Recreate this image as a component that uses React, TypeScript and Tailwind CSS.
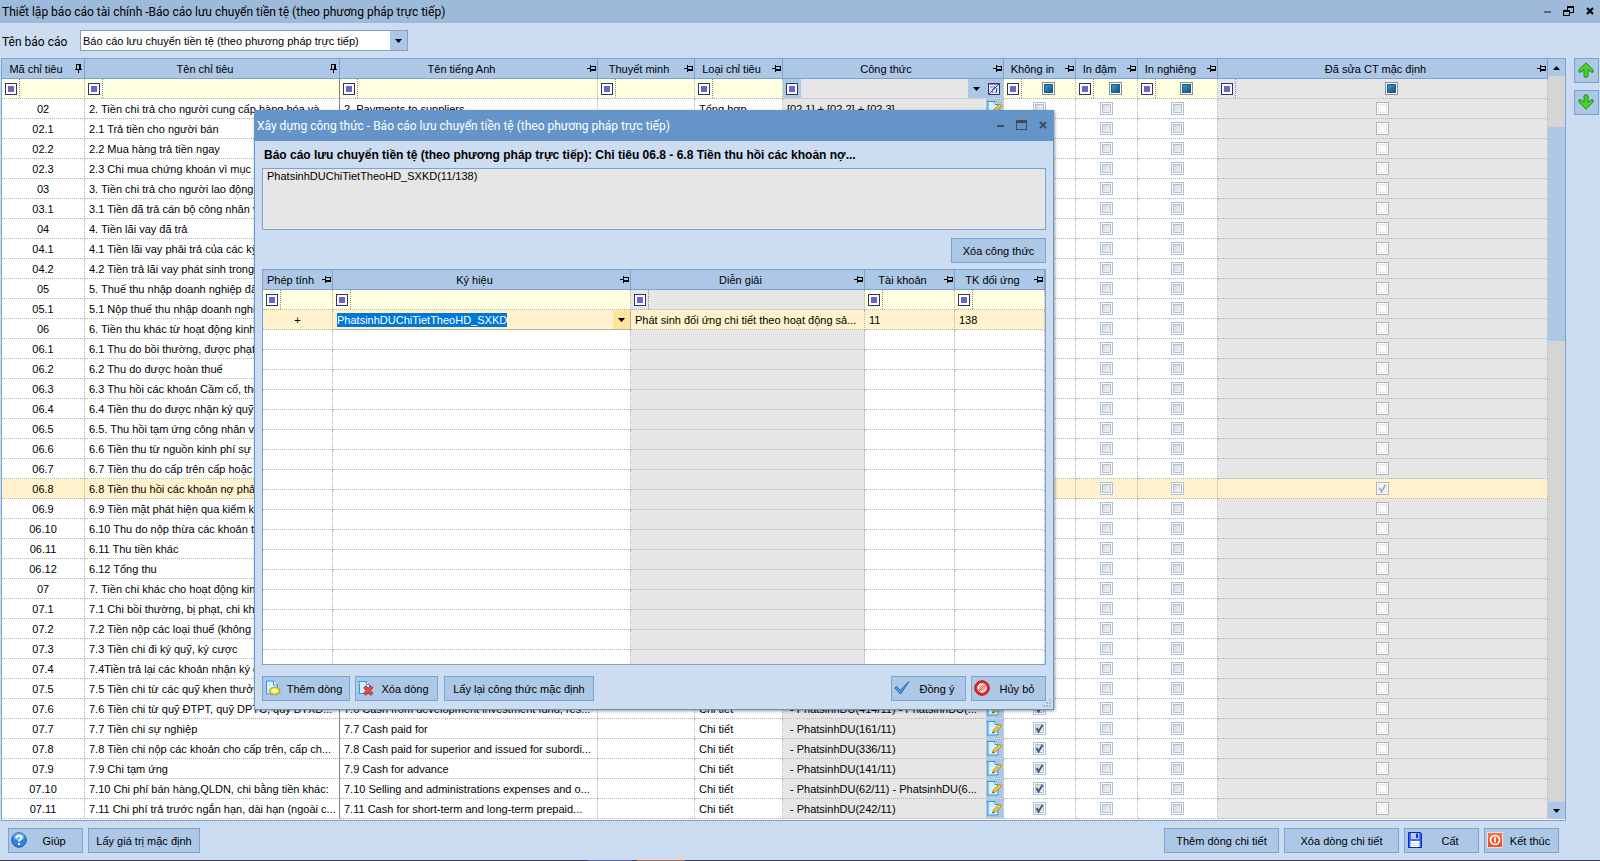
import { clsx } from "clsx";
import { FC, ReactNode } from "react";

type TRow = {
  code: string;
  name: string;
  english?: string;
  kind?: string;
  formula?: string;
  hidden?: boolean;
  edited?: boolean;
};

const REPORT_NAME = "Báo cáo lưu chuyển tiền tệ (theo phương pháp trực tiếp)";

const rows: TRow[] = [
  {
    code: "02",
    name: "2. Tiền chi trả cho người cung cấp hàng hóa và",
    english: "2. Payments to suppliers",
    kind: "Tổng hợp",
    formula: "[02.1] + [02.2] + [02.3]",
  },
  { code: "02.1", name: "2.1 Trả tiền cho người bán" },
  { code: "02.2", name: "2.2 Mua hàng trả tiền ngay" },
  { code: "02.3", name: "2.3 Chi mua chứng khoán vì mục đích" },
  { code: "03", name: "3. Tiền chi trả cho người lao động" },
  { code: "03.1", name: "3.1 Tiền đã trả cán bộ công nhân viên" },
  { code: "04", name: "4. Tiền lãi vay đã trả" },
  { code: "04.1", name: "4.1 Tiền lãi vay phải trả của các kỳ" },
  { code: "04.2", name: "4.2 Tiền trả lãi vay phát sinh trong kỳ" },
  { code: "05", name: "5. Thuế thu nhập doanh nghiệp đã nộp" },
  { code: "05.1", name: "5.1 Nộp thuế thu nhập doanh nghiệp" },
  { code: "06", name: "6. Tiền thu khác từ hoạt động kinh doanh" },
  { code: "06.1", name: "6.1 Thu do bồi thường, được phạt, tiền" },
  { code: "06.2", name: "6.2 Thu do được hoàn thuế" },
  { code: "06.3", name: "6.3 Thu hồi các khoản Cầm cố, thế chấp" },
  { code: "06.4", name: "6.4 Tiền thu do được nhận ký quỹ" },
  { code: "06.5", name: "6.5. Thu hồi tạm ứng công nhân viên" },
  { code: "06.6", name: "6.6 Tiền thu từ nguồn kinh phí sự nghiệp" },
  { code: "06.7", name: "6.7 Tiền thu do cấp trên cấp hoặc cấp" },
  { code: "06.8", name: "6.8 Tiền thu hồi các khoản nợ phải thu", edited: true },
  { code: "06.9", name: "6.9 Tiền mặt phát hiện qua kiểm kê" },
  { code: "06.10", name: "6.10 Thu do nộp thừa các khoản thuế" },
  { code: "06.11", name: "6.11 Thu tiền khác" },
  { code: "06.12", name: "6.12 Tổng thu" },
  { code: "07", name: "7. Tiền chi khác cho hoạt động kinh doanh" },
  { code: "07.1", name: "7.1 Chi bồi thường, bị phạt, chi khác" },
  { code: "07.2", name: "7.2 Tiền nộp các loại thuế (không bao" },
  { code: "07.3", name: "7.3 Tiền chi đi ký quỹ, ký cược" },
  { code: "07.4", name: "7.4Tiền trả lại các khoản nhận ký quỹ" },
  { code: "07.5", name: "7.5 Tiền chi từ các quỹ khen thưởng" },
  {
    code: "07.6",
    name: "7.6 Tiền chi từ quỹ ĐTPT, quỹ DPTC, quỹ BTXD...",
    english: "7.6 Cash from development investment fund, res...",
    kind: "Chi tiết",
    formula: "- PhatsinhDU(414/11) - PhatsinhDU(...",
    hidden: true,
  },
  {
    code: "07.7",
    name: "7.7 Tiền chi sự nghiệp",
    english: "7.7 Cash paid for",
    kind: "Chi tiết",
    formula: "- PhatsinhDU(161/11)",
    hidden: true,
  },
  {
    code: "07.8",
    name: "7.8 Tiền chi nộp các khoản cho cấp trên, cấp ch...",
    english: "7.8 Cash paid for superior and issued for subordi...",
    kind: "Chi tiết",
    formula: "- PhatsinhDU(336/11)",
    hidden: true,
  },
  {
    code: "07.9",
    name: "7.9 Chi tạm ứng",
    english: "7.9 Cash for advance",
    kind: "Chi tiết",
    formula: "- PhatsinhDU(141/11)",
    hidden: true,
  },
  {
    code: "07.10",
    name: "7.10 Chi phí bán hàng,QLDN, chi bằng tiền khác:",
    english: "7.10 Selling and administrations expenses and o...",
    kind: "Chi tiết",
    formula: "- PhatsinhDU(62/11) - PhatsinhDU(6...",
    hidden: true,
  },
  {
    code: "07.11",
    name: "7.11 Chi phí trả trước ngắn hạn, dài hạn (ngoài c...",
    english: "7.11 Cash for short-term and long-term prepaid...",
    kind: "Chi tiết",
    formula: "- PhatsinhDU(242/11)",
    hidden: true,
  },
];

const CELL = "h-5 overflow-hidden whitespace-nowrap border-b border-r border-dotted border-[#b2b2b2] p-0";

/* Icons */

const PinIcon: FC<{ pinned?: boolean }> = ({ pinned }) => (
  <svg width="9" height="9" viewBox="0 0 9 9" shapeRendering="crispEdges" aria-hidden="true">
    {pinned ? (
      <path d="M2 0h5v5h1v1H5v3H4V6H1V5h1zM3 1v4h2V1z" fillRule="evenodd" />
    ) : (
      <path d="M0 4h3V1h1v1h5v5H4v1H3V5H0zM4 3v2h4V3z" fillRule="evenodd" />
    )}
  </svg>
);

const CaretIcon: FC<{ up?: boolean }> = ({ up }) => (
  <svg width="7" height="4" viewBox="0 0 7 4" aria-hidden="true">
    <path d={up ? "M0 4h7L3.500 0z" : "M0 0h7L3.500 4z"} />
  </svg>
);

const MinimizeIcon = () => (
  <svg width="7" height="11" viewBox="0 0 7 11" shapeRendering="crispEdges" aria-hidden="true">
    <path d="M0 5h7v2H0z" fill="currentColor" />
  </svg>
);

const RestoreIcon = () => (
  <svg width="11" height="11" viewBox="0 0 11 11" shapeRendering="crispEdges" aria-hidden="true">
    <path d="M4 0h7v7H7V6h3V2H5v2H4zM0 4h7v6H0zM1 6v3h5V6z" fill="currentColor" fillRule="evenodd" />
  </svg>
);

const MaximizeIcon = () => (
  <svg width="11" height="11" viewBox="0 0 11 11" shapeRendering="crispEdges" aria-hidden="true">
    <path d="M0 0h11v10H0zM1 3v6h9V3z" fill="currentColor" fillRule="evenodd" />
  </svg>
);

const CloseIcon = () => (
  <svg width="8" height="11" viewBox="0 0 8 11" aria-hidden="true">
    <path d="M1 2l6 6M7 2L1 8" stroke="currentColor" strokeWidth="2" />
  </svg>
);

const ClearFilterIcon = () => (
  <svg width="12" height="12" viewBox="0 0 12 12" aria-hidden="true">
    <path d="M.5.5h11v11H.5z" fill="#e3e7f8" stroke="#33336b" />
    <path d="M1 1h10v1H1z" fill="#8c8fd6" />
    <path d="M2 4h5L4.500 6.500V10" fill="none" stroke="#7a7dcc" />
    <path d="M1 11L11 1M9 5L8 10" fill="none" stroke="#33336b" />
  </svg>
);

const EditIcon = () => (
  <svg width="16" height="16" viewBox="0 0 16 16" aria-hidden="true">
    <path d="M1 1.500h8l3 3V15H1l1-1V3z" fill="#d9f1fc" stroke="#2b95dd" />
    <path d="M9 1.500v3h3" fill="#fff" stroke="#2b95dd" />
    <path d="M13.500 4l2 2-6 6-3 1 1-3z" fill="#f7cd45" stroke="#b48312" />
    <path d="M6.500 13l.5-1.500 1 1z" fill="#333" />
  </svg>
);

const PagePlusIcon = () => (
  <svg width="16" height="16" viewBox="0 0 16 16" aria-hidden="true">
    <path d="M1.500 1h7l4 4v9h-11z" fill="#d5effc" stroke="#2f97dd" />
    <path d="M8.500 1v4h4" fill="#fff" stroke="#2f97dd" />
    <path
      d="M9.500 6.500l1.300 1.300 2-.3.500 1.500 1.700.5-.5 1.500.5 1.500-1.700.5-.8 1.200-1.700-.2-1.300 1-1.300-1-1.800.2-.6-1.300-1.300-.6.600-1.400-.6-1.200 1.500-.6.700-1.300 1.700.1z"
      fill="#f5ea55"
      stroke="#a79b12"
    />
    <ellipse cx="9.500" cy="10.800" rx="2.500" ry="1.500" fill="#fffbb5" />
  </svg>
);

const PageDeleteIcon = () => (
  <svg width="16" height="16" viewBox="0 0 16 16" aria-hidden="true">
    <path d="M.5 1.500h8l3 3v9H.5l1-1v-9z" fill="#d5effc" stroke="#2f97dd" />
    <path d="M8.500 1.500v3h3" fill="#fff" stroke="#2f97dd" />
    <path d="M6.500 6.500l7.500 8M14 6.500l-7.500 8" stroke="#a81f1f" strokeWidth="3.600" />
    <path d="M6.800 6.800l7 7.400M13.700 6.800l-7 7.400" stroke="#ea5050" strokeWidth="2" />
  </svg>
);

const AcceptIcon = () => (
  <svg width="16" height="16" viewBox="0 0 16 16" aria-hidden="true">
    <path d="M.8 8l2-1.500 3.400 4L15 1.500 6.500 14z" fill="#53a5f3" stroke="#1a62b8" strokeLinejoin="round" />
  </svg>
);

const CancelIcon = () => (
  <svg width="16" height="16" viewBox="0 0 16 16" aria-hidden="true">
    <circle cx="8" cy="8" r="7.300" fill="#e22b2b" stroke="#b01818" />
    <circle cx="8" cy="8" r="4" fill="#f6b0a8" stroke="#fff" strokeWidth="1.500" />
    <path d="M5.200 10.800l5.600-5.600" stroke="#e22b2b" strokeWidth="3" />
    <path d="M5 9.800L9.800 5M6.200 11L11 6.200" stroke="#fff" />
  </svg>
);

const HelpIcon = () => (
  <svg width="16" height="16" viewBox="0 0 16 16" aria-hidden="true">
    <circle cx="8" cy="8" r="7.300" fill="#2f83e0" stroke="#1b5aa8" />
    <ellipse cx="8" cy="4.800" rx="5.500" ry="3.700" fill="#8fc3f7" opacity=".7" />
    <path d="M5.500 6c0-3.200 5-3.200 5-.3C10.500 7.600 8 7.500 8 9.500" fill="none" stroke="#fff" strokeWidth="1.800" />
    <path d="M7 11h2v2H7z" fill="#fff" />
  </svg>
);

const SaveIcon = () => (
  <svg width="16" height="16" viewBox="0 0 16 16" aria-hidden="true">
    <path d="M1.500.5h12l1 1v14h-13z" fill="#3f6cf0" stroke="#0a23b8" />
    <path d="M4 1h8v6H4z" fill="#b9ccf8" />
    <path d="M9 1.500h2V6H9z" fill="#1533c8" />
    <path d="M3.500 9h9v6h-9z" fill="#fff" />
    <path d="M4 11h8v1H4zM4 13h8v1H4z" fill="#d3d8e2" />
  </svg>
);

const ExitIcon = () => (
  <svg width="16" height="16" viewBox="0 0 16 16" aria-hidden="true">
    <path d="M.5.5h15v15H.5z" fill="#e4552c" stroke="#f6dcd2" />
    <path d="M1 1h14v6H1z" fill="#ec7249" />
    <circle cx="8" cy="8" r="4.500" fill="none" stroke="#fff" strokeWidth="1.600" />
    <path d="M8 5.500v5" stroke="#fff" strokeWidth="1.800" />
  </svg>
);

const ArrowIcon: FC<{ down?: boolean }> = ({ down }) => (
  <svg width="16" height="16" viewBox="0 0 16 16" aria-hidden="true">
    <path
      d="M8 .8l7 7v2.400h-1.800L10 7.500v7L8 15.500l-2-1v-7l-3.200 2.700H1V7.800z"
      fill="#4fd02c"
      stroke="#1f8a10"
      strokeLinejoin="round"
      transform={down ? "rotate(180 8 8)" : undefined}
    />
  </svg>
);

/* Controls */

type TButton = {
  children: ReactNode;
  className?: string;
  icon?: ReactNode;
};

const Button: FC<TButton> = ({ children, className, icon }) => (
  <button
    type="button"
    className={clsx(
      "flex h-[25px] shrink-0 items-center whitespace-nowrap border border-[#7ba2d0] bg-[#adc7e7]",
      className,
    )}
  >
    {icon && <span className="ml-0.5 shrink-0 pb-0.5">{icon}</span>}
    <span className={clsx("flex-1 text-center", icon && "pr-px")}>{children}</span>
  </button>
);

type TCheckbox = {
  checked?: boolean;
  label: string;
  muted?: boolean;
};

const Checkbox: FC<TCheckbox> = ({ checked = false, label, muted }) => (
  <span className="relative mx-auto block size-[13px]">
    <input
      type="checkbox"
      aria-label={label}
      defaultChecked={checked}
      className={clsx(
        "block size-[13px] appearance-none border bg-linear-to-br",
        muted
          ? "border-[#b1b1b7] from-[#f4f4f6] to-white shadow-[inset_0_0_0_1px_#fff,inset_0_0_0_2px_#e6e6ea]"
          : "border-[#a9c1e1] from-[#cdd0d6] to-[#fbfbfb] shadow-[inset_0_0_0_1px_#fff,inset_0_0_0_2px_#b9bec8]",
      )}
    />
    {checked && (
      <svg
        className="pointer-events-none absolute inset-0"
        width="13"
        height="13"
        viewBox="0 0 13 13"
        aria-hidden="true"
      >
        <path
          d="M3.500 6l2 3.500L9.500 3"
          fill="none"
          stroke={muted ? "#a9b2c2" : "#3f5c8c"}
          strokeWidth="2"
        />
      </svg>
    )}
  </span>
);

const FilterMark: FC<{ shaded?: boolean }> = ({ shaded }) => (
  <span
    className={clsx(
      "flex h-full w-[18px] shrink-0 items-center border-r border-dotted pl-[3px]",
      shaded ? "border-transparent bg-[#adc7e7]" : "border-[#8c8c8c]",
    )}
  >
    <span className="flex size-3 items-center justify-center border border-[#33336b] bg-white">
      <span className="size-1.5 bg-[#6666cc]"></span>
    </span>
  </span>
);

const TextFilter: FC<{ label: string }> = ({ label }) => (
  <div className="flex h-[19px]">
    <FilterMark />
    <input type="text" aria-label={label} className="w-full min-w-0 bg-transparent px-1 outline-none" />
  </div>
);

const CheckFilter: FC<{ label: string }> = ({ label }) => (
  <div className="flex h-[19px] items-center">
    <FilterMark />
    <span className="flex flex-1 justify-center">
      <input
        type="checkbox"
        aria-label={label}
        className="block size-[13px] appearance-none border border-[#8a8f94] bg-linear-to-br from-[#3fb0dc] to-[#123f74] shadow-[inset_0_0_0_1px_#fff,inset_0_0_0_2px_#1d5b87]"
      />
    </span>
  </div>
);

const HeadCell: FC<{ children: string; pinned?: boolean }> = ({ children, pinned }) => (
  <th className="h-5 border-b border-r border-[#7ba2d0] bg-[#adc7e7] p-0 font-normal">
    <div className="flex items-center pr-px">
      <span className="flex-1 whitespace-nowrap pr-1 text-center">{children}</span>
      <PinIcon pinned={pinned} />
    </div>
  </th>
);

/* Main grid */

const IndicatorRow: FC<{ row: TRow }> = ({ row }) => {
  const active = row.edited;

  return (
    <tr className={active ? "bg-[#fff2cc]" : "bg-white"}>
      <td className={clsx(CELL, "text-center")}>{row.code}</td>
      <td className="h-5 overflow-hidden whitespace-nowrap border-b border-r border-b-[#b2b2b2] border-r-[#808080] p-0 pl-1 [border-bottom-style:dotted]">
        {row.name}
      </td>
      <td className={clsx(CELL, "pl-1")}>{row.english}</td>
      <td className={CELL}></td>
      <td className={clsx(CELL, "pl-1")}>{row.kind}</td>
      <td className={clsx(CELL, !active && "bg-[#e6e6e6]")}>
        <div className="flex h-[19px] items-center">
          <span
            className={clsx(
              "min-w-0 flex-1 overflow-hidden",
              row.kind === "Chi tiết" ? "pl-[7px]" : "pl-1",
            )}
          >
            {row.formula}
          </span>
          <button
            type="button"
            aria-label={`Sửa công thức ${row.code}`}
            className="flex h-full w-[17px] shrink-0 items-center bg-[#adc7e7] pb-0.5"
          >
            <EditIcon />
          </button>
        </div>
      </td>
      <td className={CELL}>
        <Checkbox checked={row.hidden} label={`Không in ${row.code}`} />
      </td>
      <td className={CELL}>
        <Checkbox label={`In đậm ${row.code}`} />
      </td>
      <td className={CELL}>
        <Checkbox label={`In nghiêng ${row.code}`} />
      </td>
      <td className={clsx(CELL, !active && "bg-[#e6e6e6]")}>
        <Checkbox checked={row.edited} label={`Đã sửa ${row.code}`} muted />
      </td>
    </tr>
  );
};

const IndicatorGrid = () => (
  <table className="min-w-0 flex-1 table-fixed border-separate border-spacing-0 self-start">
    <colgroup>
      <col className="w-[83px]" />
      <col className="w-[255px]" />
      <col className="w-[258px]" />
      <col className="w-[97px]" />
      <col className="w-[88px]" />
      <col className="w-[221px]" />
      <col className="w-[72px]" />
      <col className="w-[62px]" />
      <col className="w-[80px]" />
      <col />
    </colgroup>
    <thead>
      <tr>
        <HeadCell pinned>Mã chỉ tiêu</HeadCell>
        <HeadCell pinned>Tên chỉ tiêu</HeadCell>
        <HeadCell>Tên tiếng Anh</HeadCell>
        <HeadCell>Thuyết minh</HeadCell>
        <HeadCell>Loại chỉ tiêu</HeadCell>
        <HeadCell>Công thức</HeadCell>
        <HeadCell>Không in</HeadCell>
        <HeadCell>In đậm</HeadCell>
        <HeadCell>In nghiêng</HeadCell>
        <HeadCell>Đã sửa CT mặc định</HeadCell>
      </tr>
    </thead>
    <tbody>
      <tr className="bg-[#ffffe1]">
        <td className={CELL}>
          <TextFilter label="Lọc mã chỉ tiêu" />
        </td>
        <td className="h-5 border-b border-r border-b-[#b2b2b2] border-r-[#808080] p-0 [border-bottom-style:dotted]">
          <TextFilter label="Lọc tên chỉ tiêu" />
        </td>
        <td className={CELL}>
          <TextFilter label="Lọc tên tiếng Anh" />
        </td>
        <td className={CELL}>
          <TextFilter label="Lọc thuyết minh" />
        </td>
        <td className={CELL}>
          <TextFilter label="Lọc loại chỉ tiêu" />
        </td>
        <td className={clsx(CELL, "bg-[#e6e6e6]")}>
          <div className="flex h-[19px]">
            <FilterMark shaded />
            <input
              type="text"
              aria-label="Lọc công thức"
              className="min-w-0 flex-1 bg-transparent px-1 outline-none"
            />
            <button
              type="button"
              aria-label="Chọn điều kiện lọc"
              className="flex w-[17px] items-center justify-center bg-[#adc7e7]"
            >
              <CaretIcon />
            </button>
            <button
              type="button"
              aria-label="Xóa điều kiện lọc"
              className="flex w-[18px] items-center justify-center bg-[#adc7e7]"
            >
              <ClearFilterIcon />
            </button>
          </div>
        </td>
        <td className={CELL}>
          <CheckFilter label="Lọc không in" />
        </td>
        <td className={CELL}>
          <CheckFilter label="Lọc in đậm" />
        </td>
        <td className={CELL}>
          <CheckFilter label="Lọc in nghiêng" />
        </td>
        <td className={clsx(CELL, "bg-[#e6e6e6]")}>
          <CheckFilter label="Lọc đã sửa CT mặc định" />
        </td>
      </tr>
      {rows.map((row) => (
        <IndicatorRow key={row.code} row={row} />
      ))}
    </tbody>
  </table>
);

const ScrollBar = () => (
  <div className="flex w-[17px] shrink-0 flex-col bg-[#d5d5d5]">
    <button
      type="button"
      aria-label="Cuộn lên"
      className="flex h-[17px] items-center justify-center bg-[#adc7e7]"
    >
      <CaretIcon up />
    </button>
    <div className="mt-[51px] h-[214px] bg-[#adc7e7]"></div>
    <button
      type="button"
      aria-label="Cuộn xuống"
      className="mt-auto flex h-[17px] items-center justify-center bg-[#adc7e7]"
    >
      <CaretIcon />
    </button>
  </div>
);

/* Formula window */

const FormulaGrid = () => (
  <div className="h-[396px] overflow-hidden border border-[#7ba2d0] bg-white">
    <table className="w-full table-fixed border-separate border-spacing-0">
      <colgroup>
        <col className="w-[70px]" />
        <col />
        <col className="w-[234px]" />
        <col className="w-[90px]" />
        <col className="w-[90px]" />
      </colgroup>
      <thead>
        <tr>
          <HeadCell>Phép tính</HeadCell>
          <HeadCell>Ký hiệu</HeadCell>
          <HeadCell>Diễn giải</HeadCell>
          <HeadCell>Tài khoản</HeadCell>
          <HeadCell>TK đối ứng</HeadCell>
        </tr>
      </thead>
      <tbody>
        <tr className="bg-[#ffffe1]">
          <td className={CELL}>
            <TextFilter label="Lọc phép tính" />
          </td>
          <td className={CELL}>
            <TextFilter label="Lọc ký hiệu" />
          </td>
          <td className={clsx(CELL, "bg-[#e6e6e6]")}>
            <TextFilter label="Lọc diễn giải" />
          </td>
          <td className={CELL}>
            <TextFilter label="Lọc tài khoản" />
          </td>
          <td className={CELL}>
            <TextFilter label="Lọc TK đối ứng" />
          </td>
        </tr>
        <tr className="bg-[#fff2cc]">
          <td className={clsx(CELL, "text-center")}>+</td>
          <td className="h-5 border-b border-r border-[#b2b2b2] p-0">
            <div className="flex h-[19px] items-center pl-1">
              <span className="bg-[#0078d7] leading-[14px] text-white">PhatsinhDUChiTietTheoHD_SXKD</span>
              <button
                type="button"
                aria-label="Chọn ký hiệu"
                className="ml-auto flex h-full w-[17px] items-center justify-center bg-[#ffe49c]"
              >
                <CaretIcon />
              </button>
            </div>
          </td>
          <td className={clsx(CELL, "pl-1")}>Phát sinh đối ứng chi tiết theo hoạt động sả...</td>
          <td className={clsx(CELL, "pl-1")}>11</td>
          <td className={clsx(CELL, "pl-1")}>138</td>
        </tr>
        {Array.from({ length: 17 }, (_, index) => (
          <tr key={index}>
            <td className={CELL}></td>
            <td className={CELL}></td>
            <td className={clsx(CELL, "bg-[#e6e6e6]")}></td>
            <td className={CELL}></td>
            <td className={CELL}></td>
          </tr>
        ))}
      </tbody>
    </table>
  </div>
);

const ResizeGrip = () => (
  <svg
    className="absolute bottom-px right-px"
    width="9"
    height="9"
    viewBox="0 0 9 9"
    shapeRendering="crispEdges"
    aria-hidden="true"
  >
    <path d="M6 0h2v2H6zM3 3h2v2H3zM6 3h2v2H6zM0 6h2v2H0zM3 6h2v2H3zM6 6h2v2H6z" fill="#b3b8c2" />
  </svg>
);

const FormulaWindow = () => (
  <section
    role="dialog"
    aria-labelledby="formula-title"
    className="absolute left-[254px] top-[110px] w-[800px] border border-t-0 border-[#6595c8] bg-[#ccdcf1] shadow-[1px_1px_3px_rgba(0,0,0,0.4)]"
  >
    <header className="flex h-[31px] items-center bg-[#6595c8] pl-0.5 pr-1.5 font-[Roboto,sans-serif] text-[12px] text-white">
      <h2 id="formula-title" className="flex-1 pt-px">
        Xây dựng công thức - {REPORT_NAME}
      </h2>
      <div className="flex items-center gap-3 text-[#444b57]">
        <button type="button" aria-label="Thu nhỏ">
          <MinimizeIcon />
        </button>
        <button type="button" aria-label="Phóng to">
          <MaximizeIcon />
        </button>
        <button type="button" aria-label="Đóng">
          <CloseIcon />
        </button>
      </div>
    </header>
    <div className="px-[7px] pb-2">
      <h3 className="flex h-[27px] items-center pl-0.5 text-[12px] font-bold">
        {REPORT_NAME}: Chỉ tiêu 06.8 - 6.8 Tiền thu hồi các khoản nợ...
      </h3>
      <textarea
        readOnly
        aria-label="Công thức"
        defaultValue="PhatsinhDUChiTietTheoHD_SXKD(11/138)"
        className="block h-[62px] w-full resize-none border border-[#7ba2d0] bg-[#e6e6e6] px-1 leading-[14px] outline-none"
      />
      <div className="flex justify-end pb-1.5 pt-2">
        <Button className="w-[95px]">Xóa công thức</Button>
      </div>
      <FormulaGrid />
      <div className="flex gap-[5px] pt-[11px]">
        <Button className="w-[88px]" icon={<PagePlusIcon />}>
          Thêm dòng
        </Button>
        <Button className="w-[83px]" icon={<PageDeleteIcon />}>
          Xóa dòng
        </Button>
        <Button className="ml-px w-[150px]">Lấy lại công thức mặc định</Button>
        <div className="ml-auto flex gap-[5px]">
          <Button className="w-[75px]" icon={<AcceptIcon />}>
            Đồng ý
          </Button>
          <Button className="w-[75px]" icon={<CancelIcon />}>
            Hủy bỏ
          </Button>
        </div>
      </div>
    </div>
    <ResizeGrip />
  </section>
);

export default function App() {
  return (
    <div className="relative flex min-h-screen flex-col overflow-hidden bg-[#ccdcf1] font-['Liberation_Sans',Arial,sans-serif] text-[11px] leading-4 text-black">
      <header className="flex h-[23px] items-center bg-[#9dbada] pl-0.5 pr-1.5 font-[Roboto,sans-serif] text-[12px]">
        <h1 className="flex-1">Thiết lập báo cáo tài chính -{REPORT_NAME}</h1>
        <div className="flex items-center gap-3">
          <button type="button" aria-label="Thu nhỏ" className="text-[#666]">
            <MinimizeIcon />
          </button>
          <button type="button" aria-label="Khôi phục">
            <RestoreIcon />
          </button>
          <button type="button" aria-label="Đóng">
            <CloseIcon />
          </button>
        </div>
      </header>

      <div className="flex h-[35px] items-center pl-0.5">
        <label htmlFor="report" className="w-[78px] pt-0.5 font-[Roboto,sans-serif] text-[12px]">
          Tên báo cáo
        </label>
        <div className="flex h-[21px] w-[328px] border border-[#7ba2d0] bg-white">
          <select id="report" className="min-w-0 flex-1 appearance-none pl-0.5 outline-none">
            <option>{REPORT_NAME}</option>
          </select>
          <span className="pointer-events-none flex w-[17px] items-center justify-center bg-[#adc7e7]">
            <CaretIcon />
          </span>
        </div>
      </div>

      <main className="flex pl-px">
        <div className="flex min-w-0 flex-1 border border-[#7ba2d0] bg-white pb-px">
          <IndicatorGrid />
          <ScrollBar />
        </div>
        <div className="flex shrink-0 flex-col gap-[7px] pl-2 pr-px">
          <button
            type="button"
            aria-label="Chuyển lên"
            className="flex size-[25px] items-center justify-center border border-[#7ba2d0] bg-[#adc7e7] pb-0.5 pr-0.5"
          >
            <ArrowIcon />
          </button>
          <button
            type="button"
            aria-label="Chuyển xuống"
            className="flex size-[25px] items-center justify-center border border-[#7ba2d0] bg-[#adc7e7] pb-0.5 pr-0.5"
          >
            <ArrowIcon down />
          </button>
        </div>
      </main>

      <footer className="flex gap-[5px] pb-[7px] pl-2 pr-[41px] pt-[7px]">
        <Button className="w-[75px]" icon={<HelpIcon />}>
          Giúp
        </Button>
        <Button className="w-[112px]">Lấy giá trị mặc định</Button>
        <div className="ml-auto flex gap-[5px]">
          <Button className="w-[115px]">Thêm dòng chi tiết</Button>
          <Button className="w-[115px]">Xóa dòng chi tiết</Button>
          <Button className="w-[75px]" icon={<SaveIcon />}>
            Cất
          </Button>
          <Button className="w-[75px]" icon={<ExitIcon />}>
            Kết thúc
          </Button>
        </div>
      </footer>
      <div className="mt-auto flex h-px bg-[#3f3b58] pl-[588px]">
        <span className="w-11 bg-[#6264a0]"></span>
        <span className="ml-[5px] w-12 bg-[#b9683f]"></span>
      </div>

      <FormulaWindow />
    </div>
  );
}
